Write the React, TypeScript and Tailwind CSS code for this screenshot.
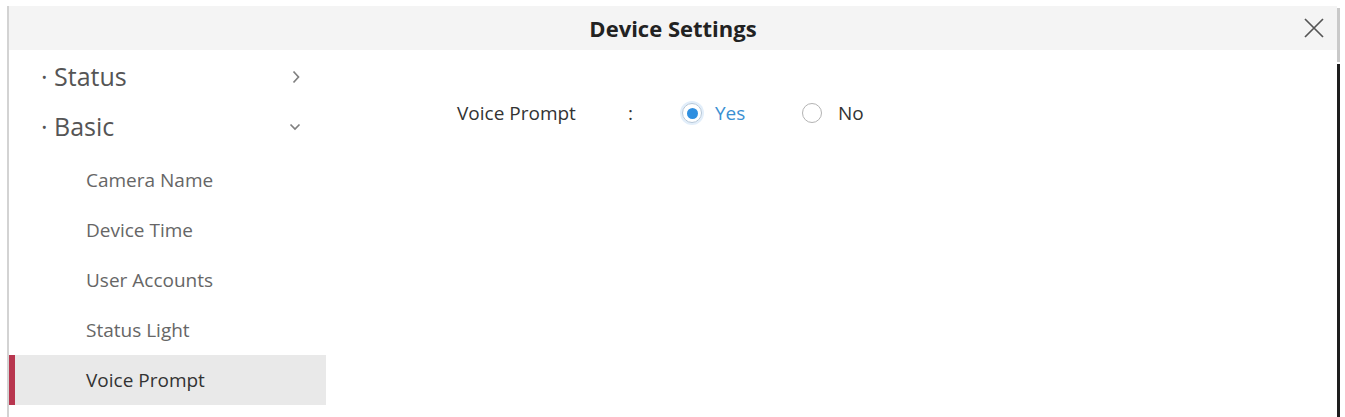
import React from "react"

const subItems = ["Camera Name", "Device Time", "User Accounts", "Status Light", "Voice Prompt"]

function ChevronRight() {
  return (
    <svg width="10" height="14" viewBox="0 0 10 14" fill="none" stroke="#808080" strokeWidth="1.7">
      <path d="M2.5 1.5 L7.5 7 L2.5 12.5" />
    </svg>
  )
}

function ChevronDown() {
  return (
    <svg width="12" height="8" viewBox="0 0 12 8" fill="none" stroke="#808080" strokeWidth="1.7">
      <path d="M1.5 1.5 L6 6 L10.5 1.5" />
    </svg>
  )
}

function Radio({ checked }: { checked: boolean }) {
  return (
    <span
      className={
        checked
          ? "w-[20px] h-[20px] rounded-full border border-[#b4c6d8] shadow-[0_0_0_2px_#e2eefa] flex items-center justify-center"
          : "w-[20px] h-[20px] rounded-full border border-[#b3b3b3] flex items-center justify-center"
      }
    >
      {checked && <span className="w-[11px] h-[11px] rounded-full bg-[#2f8fe0]" />}
    </span>
  )
}

export default function App() {
  return (
    <div className="w-[1345px] h-[417px] bg-white overflow-hidden flex pl-[7px] pt-[6px] font-['Open_Sans',sans-serif]">
      <div className="flex-1 flex flex-col border-l-2 border-[#d3d3d3]">
        <div className="h-[44px] bg-[#f4f4f4] flex items-center relative">
          <div className="flex-1 text-center text-[22px] font-bold text-[#222]">Device Settings</div>
          <svg className="absolute right-[12px] top-[11px]" width="22" height="22" viewBox="0 0 22 22" stroke="#555" strokeWidth="1.7">
            <path d="M2 2 L20 20 M20 2 L2 20" />
          </svg>
        </div>
        <div className="flex flex-1">
          <div className="w-[317px] flex flex-col pt-[2px]">
            <div className="h-[50px] flex items-center pl-[32px] pr-[25px] text-[25px] text-[#555]">
              <span className="flex-1">·&nbsp;Status</span>
              <ChevronRight />
            </div>
            <div className="h-[50px] flex items-center pl-[32px] pr-[25px] text-[25px] text-[#555]">
              <span className="flex-1">·&nbsp;Basic</span>
              <ChevronDown />
            </div>
            <div className="h-[3px]" />
            {subItems.map((s) => {
              const active = s === "Voice Prompt"
              return (
                <div
                  key={s}
                  className={
                    active
                      ? "h-[50px] flex items-center pl-[71px] text-[19px] text-[#333] bg-[#e9e9e9] border-l-[6px] border-[#b8364f]"
                      : "h-[50px] flex items-center pl-[77px] text-[19px] text-[#666]"
                  }
                >
                  {s}
                </div>
              )
            })}
          </div>
          <div className="flex-1 pt-[50px] pl-[131px]">
            <div className="flex items-center text-[19px] h-[26px]">
              <span className="w-[171px] text-[#333]">Voice Prompt</span>
              <span className="w-[54px] text-[#333]">:</span>
              <Radio checked />
              <span className="ml-[13px] w-[87px] text-[#3a8fd2]">Yes</span>
              <Radio checked={false} />
              <span className="ml-[16px] text-[#333]">No</span>
            </div>
          </div>
        </div>
      </div>
      <div className="w-[3px] flex flex-col mt-[2px]">
        <div className="h-[54px] bg-[#c9c9c9]" />
        <div className="flex-1 bg-[#1e1e1e] mt-[2px]" />
      </div>
      <div className="w-[5px]" />
    </div>
  )
}
